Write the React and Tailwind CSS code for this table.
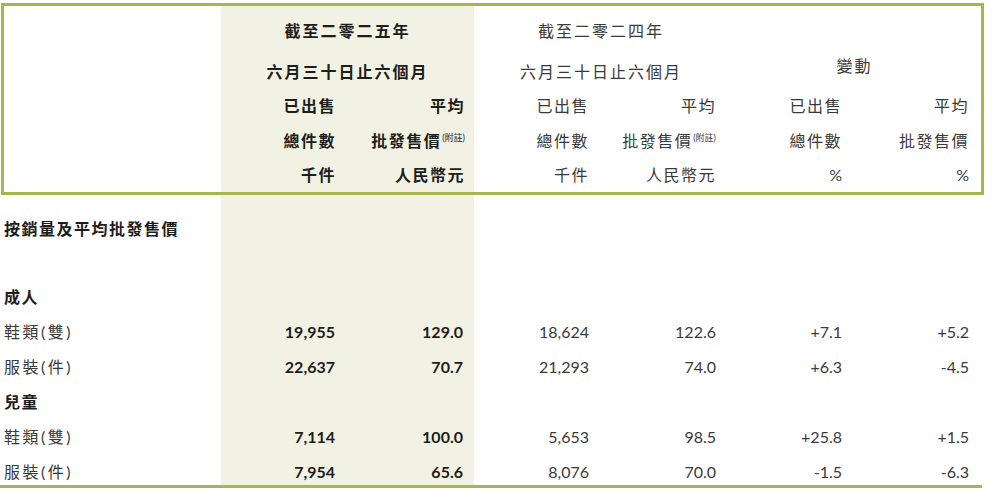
import React from 'react';

const cols = 'grid grid-cols-[217px_127px_126px_127px_127px_126px_127px]';
const bodyCols = 'grid grid-cols-[221px_127px_126px_127px_127px_126px_127px]';
const beige = 'bg-[#f2f2e4]';

const rows = [
  { type: 'section', label: '按銷量及平均批發售價', h: 'h-[47px]' },
  { type: 'blank', h: 'h-[33px]' },
  { type: 'section', label: '成人', h: 'h-[35px]' },
  { label: '鞋類(雙)', v: ['19,955', '129.0', '18,624', '122.6', '+7.1', '+5.2'] },
  { label: '服裝(件)', v: ['22,637', '70.7', '21,293', '74.0', '+6.3', '-4.5'] },
  { type: 'section', label: '兒童', h: 'h-[35px]' },
  { label: '鞋類(雙)', v: ['7,114', '100.0', '5,653', '98.5', '+25.8', '+1.5'] },
  { label: '服裝(件)', v: ['7,954', '65.6', '8,076', '70.0', '-1.5', '-6.3'] },
];

const Note = () => (
  <sup className="text-[9px] font-normal tracking-normal relative -top-[3px] ml-[1px]">(附註)</sup>
);

const HeadCell = ({ children, bold, bg, extra = '' }) => (
  <div
    className={`flex items-center justify-end pr-3 tracking-[1.5px] ${bold ? 'font-bold text-[#1d1d1b]' : 'text-[#3a3a3a]'} ${bg ? beige : ''} ${extra}`}
  >
    {children}
  </div>
);

export default function App() {
  return (
    <div className="w-[996px] h-[489px] bg-white font-['Lato','Noto_Sans_CJK_TC',sans-serif] text-[16px] leading-4 text-[#1d1d1b]">
      <div className="pt-[3px]">
        {/* header box */}
        <div className="ml-[1px] w-[983px] border-[3px] border-[#a4b64c]">
          <div className={`${cols} grid-rows-[50px_32px_36px_34px_34px]`}>
            <div className="row-span-5" />
            <div className={`col-span-2 flex items-center justify-center font-bold tracking-[2px] ${beige}`}>截至二零二五年</div>
            <div className="col-span-2 flex items-center justify-center tracking-[2px] text-[#3a3a3a]">截至二零二四年</div>
            <div className="col-span-2" />

            <div className={`col-span-2 flex items-center justify-center font-bold tracking-[2px] ${beige}`}>六月三十日止六個月</div>
            <div className="col-span-2 flex items-center justify-center tracking-[2px] text-[#3a3a3a]">六月三十日止六個月</div>
            <div className="col-span-2 flex items-center justify-center pb-[12px] tracking-[2px] text-[#3a3a3a]">變動</div>

            <HeadCell bold bg extra="pr-[12px]">已出售</HeadCell>
            <HeadCell bold bg extra="pr-[9px]">平均</HeadCell>
            <HeadCell>已出售</HeadCell>
            <HeadCell>平均</HeadCell>
            <HeadCell>已出售</HeadCell>
            <HeadCell>平均</HeadCell>

            <HeadCell bold bg extra="pr-[12px]">總件數</HeadCell>
            <HeadCell bold bg extra="pr-[9px]">批發售價<Note /></HeadCell>
            <HeadCell>總件數</HeadCell>
            <HeadCell>批發售價<Note /></HeadCell>
            <HeadCell>總件數</HeadCell>
            <HeadCell>批發售價</HeadCell>

            <HeadCell bold bg extra="pr-[12px]">千件</HeadCell>
            <HeadCell bold bg extra="pr-[9px]">人民幣元</HeadCell>
            <HeadCell>千件</HeadCell>
            <HeadCell>人民幣元</HeadCell>
            <HeadCell extra="tracking-normal">%</HeadCell>
            <HeadCell extra="tracking-normal">%</HeadCell>
          </div>
        </div>

        {/* body */}
        <div className="w-[982px] border-b-[3px] border-[#a4b64c]">
          {rows.map((r, i) => (
            <div key={i} className={`${bodyCols} ${r.h || 'h-[35px]'}`}>
              <div
                className={`flex items-end pb-[5px] pl-1 ${r.type === 'section' ? 'font-bold text-[#1d1d1b] tracking-[1.5px]' : 'text-[#3a3a3a] tracking-[2.5px]'}`}
              >
                {r.label}
              </div>
              {[0, 1, 2, 3, 4, 5].map((c) => (
                <div
                  key={c}
                  className={`flex items-end justify-end pb-[5px] ${c < 2 ? `${beige} font-bold text-[#1d1d1b]` : 'text-[#3a3a3a]'} ${c === 0 ? 'pr-[13px]' : c === 1 ? 'pr-[11px]' : 'pr-3'}`}
                >
                  {r.v ? r.v[c] : ''}
                </div>
              ))}
            </div>
          ))}
        </div>
      </div>
    </div>
  );
}
